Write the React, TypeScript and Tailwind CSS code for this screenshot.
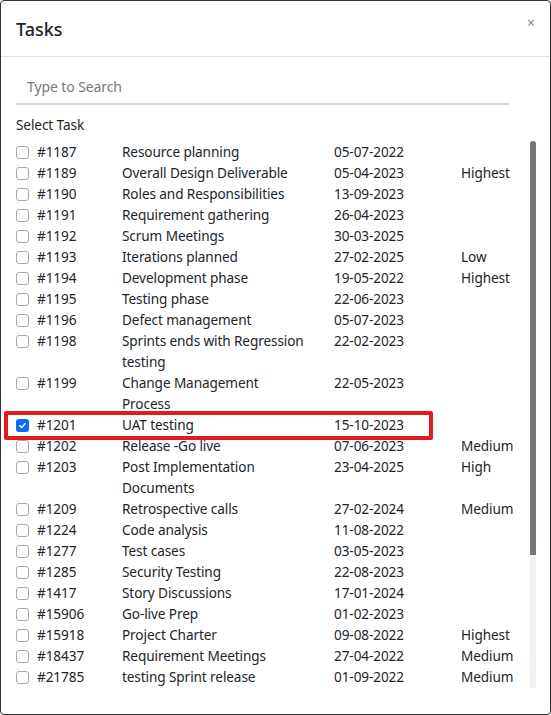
import React, { useState } from 'react';

type Task = {
  id: string;
  title: string;
  date: string;
  priority?: string;
};

const tasks: Task[] = [
  { id: '#1187', title: 'Resource planning', date: '05-07-2022' },
  { id: '#1189', title: 'Overall Design Deliverable', date: '05-04-2023', priority: 'Highest' },
  { id: '#1190', title: 'Roles and Responsibilities', date: '13-09-2023' },
  { id: '#1191', title: 'Requirement gathering', date: '26-04-2023' },
  { id: '#1192', title: 'Scrum Meetings', date: '30-03-2025' },
  { id: '#1193', title: 'Iterations planned', date: '27-02-2025', priority: 'Low' },
  { id: '#1194', title: 'Development phase', date: '19-05-2022', priority: 'Highest' },
  { id: '#1195', title: 'Testing phase', date: '22-06-2023' },
  { id: '#1196', title: 'Defect management', date: '05-07-2023' },
  { id: '#1198', title: 'Sprints ends with Regression testing', date: '22-02-2023' },
  { id: '#1199', title: 'Change Management Process', date: '22-05-2023' },
  { id: '#1201', title: 'UAT testing', date: '15-10-2023' },
  { id: '#1202', title: 'Release -Go live', date: '07-06-2023', priority: 'Medium' },
  { id: '#1203', title: 'Post Implementation Documents', date: '23-04-2025', priority: 'High' },
  { id: '#1209', title: 'Retrospective calls', date: '27-02-2024', priority: 'Medium' },
  { id: '#1224', title: 'Code analysis', date: '11-08-2022' },
  { id: '#1277', title: 'Test cases', date: '03-05-2023' },
  { id: '#1285', title: 'Security Testing', date: '22-08-2023' },
  { id: '#1417', title: 'Story Discussions', date: '17-01-2024' },
  { id: '#15906', title: 'Go-live Prep', date: '01-02-2023' },
  { id: '#15918', title: 'Project Charter', date: '09-08-2022', priority: 'Highest' },
  { id: '#18437', title: 'Requirement Meetings', date: '27-04-2022', priority: 'Medium' },
  { id: '#21785', title: 'testing Sprint release', date: '01-09-2022', priority: 'Medium' },
  { id: '#21790', title: 'Sprint review', date: '14-09-2022' },
  { id: '#21802', title: 'Backlog grooming', date: '20-09-2022', priority: 'Low' },
  { id: '#21815', title: 'Deployment checklist', date: '03-10-2022' },
  { id: '#21833', title: 'Performance testing', date: '12-10-2022', priority: 'High' },
  { id: '#21847', title: 'User training', date: '25-10-2022' },
  { id: '#21860', title: 'Handover', date: '04-11-2022' },
  { id: '#21871', title: 'Hypercare support', date: '15-11-2022', priority: 'Medium' },
  { id: '#21889', title: 'Project closure', date: '30-11-2022' },
];

const Checkbox: React.FC<{ checked: boolean; onClick: () => void }> = ({ checked, onClick }) => (
  <span
    onClick={onClick}
    className={`mt-[5px] flex h-[13px] w-[13px] items-center justify-center rounded-[3px] ${
      checked ? 'bg-[#0b6cf5]' : 'border border-[#a8a8a8] bg-white'
    }`}
  >
    {checked && (
      <svg width="9" height="9" viewBox="0 0 10 10" fill="none">
        <path d="M2 5.2 L4.2 7.2 L8 2.8" stroke="white" strokeWidth="1.6" strokeLinecap="round" strokeLinejoin="round" />
      </svg>
    )}
  </span>
);

const App: React.FC = () => {
  const [selected, setSelected] = useState<string[]>(['#1201']);

  const toggle = (id: string) => {
    setSelected((s) => (s.includes(id) ? s.filter((x) => x !== id) : [...s, id]));
  };

  return (
    <div
      className="relative flex h-[715px] w-[551px] flex-col overflow-hidden rounded-[4px] border-[1.5px] border-[#333] bg-white text-[#212529]"
      style={{ fontFamily: '"Noto Sans", "Open Sans", sans-serif' }}
    >
      <div className="flex h-[56px] shrink-0 items-start justify-between border-b border-[#e3e3e3] pl-[15px] pr-[15px]">
        <h1 className="mt-[16px] text-[18px] font-medium leading-[24px]">Tasks</h1>
        <button className="mt-[14px] text-[14px] leading-[16px] text-[#8a8a8a]">×</button>
      </div>

      <div className="flex flex-1 flex-col pl-[15px] pr-[14px]">
        <div className="mt-[13px] mr-[27px] flex h-[35px] items-center border-b-2 border-[#d6d8da] pl-[11px]">
          <input
            className="w-full bg-transparent text-[14px] tracking-[-0.1px] outline-none placeholder:text-[#7a7a7a]"
            placeholder="Type to Search"
          />
        </div>

        <div className="mt-[9px] text-[13.6px] leading-[21px] tracking-[-0.1px]">Select Task</div>

        {/* list with a drawn scrollbar on its right edge */}
        <div className="relative mt-[6px] h-[547px]">
          <div className="h-full overflow-y-auto pr-[8px] text-[13.6px] leading-[21px] tracking-[-0.1px] [scrollbar-width:none]">
            {tasks.map((t) => (
              <div key={t.id} className="grid grid-cols-[21px_85px_212px_127px_1fr] items-start">
                <Checkbox checked={selected.includes(t.id)} onClick={() => toggle(t.id)} />
                <span>{t.id}</span>
                <span className="pr-[26px]">{t.title}</span>
                <span>{t.date}</span>
                <span>{t.priority ?? ''}</span>
              </div>
            ))}
          </div>
          <div className="absolute right-0 top-0 flex h-[547px] w-[6px] flex-col bg-[#f1f1f1]">
            <div className="h-[414px] w-full rounded-t-[3px] bg-[#7a7371]" />
          </div>
        </div>
      </div>

      <div className="pointer-events-none absolute left-[3px] top-[410px] h-[29px] w-[429px] rounded-[2px] border-[4px] border-[#e31b1e]" />
    </div>
  );
};

export default App;
